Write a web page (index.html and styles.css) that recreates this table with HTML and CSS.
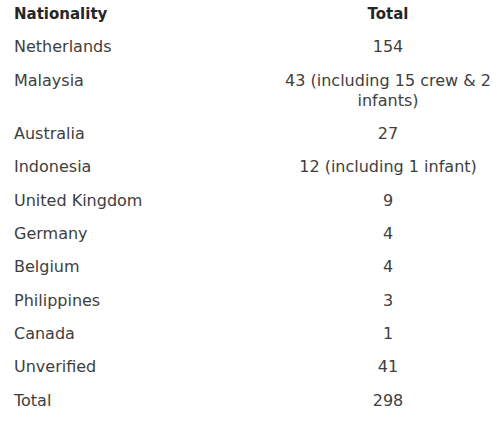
FILE: index.html
```html
<!DOCTYPE html>
<html>
<head>
<meta charset="utf-8">
<link rel="stylesheet" href="styles.css">
</head>
<body>
<table class="tally">
  <thead>
    <tr><th class="c-name">Nationality</th><th class="c-total">Total</th></tr>
  </thead>
  <tbody>
    <tr><td class="c-name">Netherlands</td><td class="c-total">154</td></tr>
    <tr><td class="c-name">Malaysia</td><td class="c-total">43 (including 15 crew &amp; 2 infants)</td></tr>
    <tr><td class="c-name">Australia</td><td class="c-total">27</td></tr>
    <tr><td class="c-name">Indonesia</td><td class="c-total">12 (including 1 infant)</td></tr>
    <tr><td class="c-name">United Kingdom</td><td class="c-total">9</td></tr>
    <tr><td class="c-name">Germany</td><td class="c-total">4</td></tr>
    <tr><td class="c-name">Belgium</td><td class="c-total">4</td></tr>
    <tr><td class="c-name">Philippines</td><td class="c-total">3</td></tr>
    <tr><td class="c-name">Canada</td><td class="c-total">1</td></tr>
    <tr><td class="c-name">Unverified</td><td class="c-total">41</td></tr>
    <tr><td class="c-name">Total</td><td class="c-total">298</td></tr>
  </tbody>
</table>
</body>
</html>
```
FILE: styles.css
```css
html, body {
  margin: 0;
  padding: 0;
  background: #ffffff;
}
.tally {
  border-collapse: collapse;
  table-layout: fixed;
  width: 500px;
  font-family: "DejaVu Sans", sans-serif;
  font-size: 16px;
  line-height: 20px;
  color: #3e3e3e;
}
.tally th {
  font-size: 15px;
  font-weight: bold;
  color: #262626;
  padding: 3.5px 2px 7.3px;
}
.tally td {
  padding: 6.67px 2px;
  vertical-align: top;
}
.tally .c-name {
  width: 260px;
  text-align: left;
  padding-left: 14px;
}
.c-total {
  text-align: center;
}
```
